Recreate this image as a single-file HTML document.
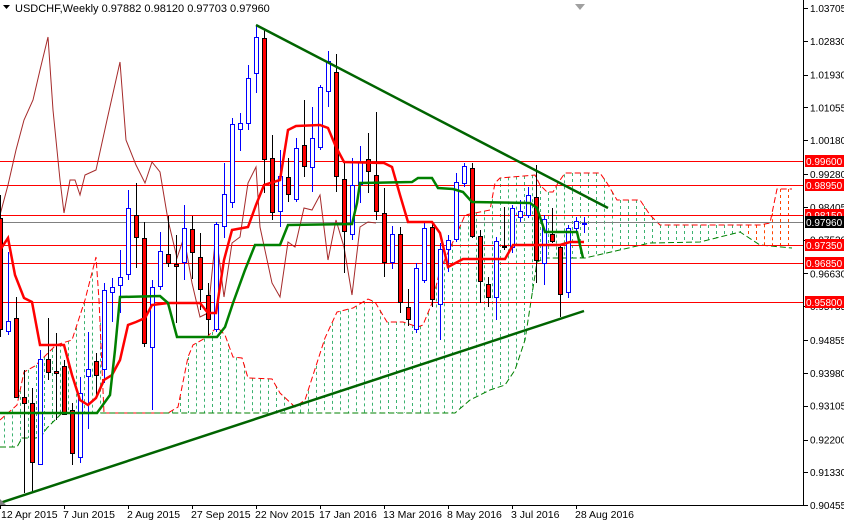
<!DOCTYPE html>
<html><head><meta charset="utf-8">
<style>
html,body{margin:0;padding:0;background:#fff;width:844px;height:520px;overflow:hidden}
svg{display:block}
text{font-family:"Liberation Sans",sans-serif;font-size:10.5px}
.ax{font-size:10px}
</style></head>
<body>
<svg id="s" width="844" height="520" viewBox="0 0 844 520" xmlns="http://www.w3.org/2000/svg">
<g id="cloud"></g>
<g id="lines" fill="none"></g>
<g id="candles" shape-rendering="crispEdges"></g>
<g id="over" fill="none"></g>
<g id="axis"></g>
</svg>
<script>
(function(){
var NS="http://www.w3.org/2000/svg";
function el(p,t,a,txt){var e=document.createElementNS(NS,t);for(var k in a)e.setAttribute(k,a[k]);if(txt!==undefined)e.textContent=txt;document.getElementById(p).appendChild(e);return e;}
function interp(pts,x){if(x<=pts[0][0])return pts[0][1];for(var i=1;i<pts.length;i++){if(x<=pts[i][0]){var a=pts[i-1],b=pts[i];return a[1]+(b[1]-a[1])*(x-a[0])/(b[0]-a[0]);}}return pts[pts.length-1][1];}
function pl(pts){return pts.map(function(p){return p.join(',');}).join(' ');}

var topB=[[0,420],[17,405],[24,372],[35,366],[56,345],[72,340],[85,300],[96,257],[99,300],[104,413],[168,413],[178,407],[188,357],[193,345],[207,337],[217,327],[225,335],[233,357],[242,358],[248,378],[272,379],[280,393],[295,407],[305,400],[325,338],[337,312],[353,308],[368,299],[375,302],[387,322],[403,322],[418,327],[423,325],[432,303],[440,270],[462,222],[465,215],[490,210],[495,183],[500,178],[535,175],[540,185],[547,192],[553,192],[558,183],[565,173],[600,173],[607,183],[617,200],[640,200],[650,215],[660,225],[760,225],[770,223],[777,189],[792,189]];
var botB=[[0,447],[17,447],[22,438],[40,438],[47,428],[55,420],[62,413],[455,413],[470,400],[490,390],[505,385],[515,370],[525,340],[537,262],[545,258],[585,258],[650,243],[700,242],[740,232],[760,245],[792,248]];
for(var x=4;x<=793;x+=8){var t=interp(topB,x),b=interp(botB,x);if(b-t<2)continue;
 el('cloud','line',{x1:x+.5,y1:t,x2:x+.5,y2:b,stroke:x>=745?'#ff4500':'#3cb371','stroke-width':1,'stroke-dasharray':'3,3'});}
el('cloud','polyline',{points:pl(topB),fill:'none',stroke:'#ff0000','stroke-width':1,'stroke-dasharray':'6,3'});
el('cloud','polyline',{points:pl(botB),fill:'none',stroke:'#008000','stroke-width':1,'stroke-dasharray':'6,3'});

[161,185,215,245,263,302].forEach(function(y){el('lines','line',{x1:0,y1:y+.5,x2:803,y2:y+.5,stroke:'#ff0000','stroke-width':1});});
el('lines','line',{x1:0,y1:222.5,x2:803,y2:222.5,stroke:'#808080','stroke-width':1});

el('lines','polyline',{points:pl([[0,215],[8,185],[16,150],[24,120],[33,100],[40,70],[48,37],[53,110],[60,180],[64,213],[70,180],[75,180],[80,195],[85,175],[96,170],[107,120],[120,62],[126,140],[136,165],[145,183],[152,162],[160,172],[168,220],[177,258],[184,237],[192,283],[200,317],[208,313],[216,233],[224,297],[232,243],[240,237],[248,183],[256,167],[260,227],[272,283],[280,297],[288,242],[295,247],[304,208],[312,210],[320,195],[328,260],[336,220],[344,247],[352,295],[360,227],[368,222],[376,223]]),stroke:'#a52a2a','stroke-width':1});

var C=[[0,218,330,195,337,0],[8,321,332,252,335,1],[16,318,398,297,398,0],[24,397,404,370,493,0],[32,403,463,388,492,0],[40,359,465,350,465,1],[48,359,373,318,380,0],[56,371,374,333,420,0],[64,366,415,360,415,0],[72,410,454,403,465,0],[80,393,458,377,463,1],[88,369,377,332,429,1],[96,361,376,353,398,0],[104,290,370,283,383,1],[112,287,293,278,322,1],[120,277,286,250,313,1],[128,208,275,190,280,1],[136,215,238,183,268,0],[144,238,344,222,347,0],[152,287,348,280,410,1],[160,251,287,232,290,1],[168,254,264,216,267,0],[176,264,267,235,323,0],[184,228,263,205,280,1],[192,229,253,216,279,0],[200,257,290,233,310,0],[208,295,320,283,335,0],[216,224,330,222,332,1],[224,194,227,163,238,1],[232,124,203,118,208,1],[240,123,130,113,151,1],[248,78,124,65,130,1],[256,37,74,25,93,1],[264,38,160,30,193,0],[272,158,213,135,220,0],[280,176,212,150,227,1],[288,177,195,158,202,0],[296,148,200,138,202,1],[304,145,167,100,177,0],[312,138,168,107,192,1],[320,87,148,85,150,1],[328,61,92,51,107,1],[336,72,177,54,192,0],[344,179,232,162,273,0],[352,185,235,158,240,1],[360,162,185,146,203,1],[368,159,172,133,193,0],[376,175,212,112,220,0],[384,213,263,188,277,0],[392,234,263,226,269,1],[400,234,303,227,313,0],[408,307,320,289,326,0],[416,268,330,263,333,1],[424,228,281,223,283,1],[432,227,300,222,307,0],[440,249,305,243,340,1],[448,240,250,235,272,1],[456,182,240,173,242,1],[464,166,184,163,187,1],[472,168,237,163,238,0],[480,236,282,230,303,0],[488,284,298,277,307,0],[496,241,298,237,320,1],[504,246,248,207,250,0],[512,208,248,205,253,1],[520,211,218,200,222,1],[528,195,216,187,218,1],[536,197,261,165,283,0],[544,219,264,215,285,1],[552,234,242,208,243,0],[560,247,295,245,317,0],[568,228,293,225,298,1],[576,221,229,217,233,1],[584,223,225,217,233,1]];
C.forEach(function(c){var x=c[0],t=c[1],b=c[2],h=c[3],l=c[4],bull=c[5];var col=bull?'#0000ff':'#000000';
 el('candles','line',{x1:x+.5,y1:h,x2:x+.5,y2:l,stroke:col,'stroke-width':1});
 el('candles','rect',{x:x-1.5,y:t+.5,width:4,height:Math.max(1,b-t-1),fill:bull?'#ffffff':'#ff0000',stroke:col,'stroke-width':1});});

el('over','polyline',{points:pl([[0,250],[8,238],[15,275],[24,298],[32,302],[40,345],[64,345],[72,375],[80,400],[88,405],[96,398],[104,380],[112,375],[120,360],[128,325],[136,322],[145,318],[152,305],[168,303],[200,303],[208,313],[216,313],[224,260],[232,230],[248,227],[256,205],[264,185],[280,180],[288,130],[296,126],[320,125],[328,128],[336,147],[344,162],[384,163],[392,167],[400,195],[408,222],[432,222],[440,233],[448,267],[463,259],[505,259],[513,245],[560,245],[570,242],[584,242]]),stroke:'#ff0000','stroke-width':2.5});
el('over','polyline',{points:pl([[0,413],[97,413],[110,395],[115,350],[120,297],[160,296],[168,303],[177,337],[217,337],[225,327],[233,303],[245,270],[255,245],[280,245],[288,225],[352,224],[357,203],[360,183],[412,182],[418,178],[432,178],[438,188],[453,189],[463,192],[472,202],[530,203],[537,208],[545,232],[577,232],[583,258]]),stroke:'#008000','stroke-width':2.5});
el('over','line',{x1:256,y1:25,x2:608,y2:208,stroke:'#006400','stroke-width':2.5});
el('over','line',{x1:0,y1:503,x2:584,y2:311,stroke:'#006400','stroke-width':2.5});
el('over','polygon',{points:'0,499 6,505 0,505',fill:'#808080'});
el('over','polygon',{points:'575,4 585,4 580,10',fill:'#a0a0a0'});

el('axis','rect',{x:803.5,y:0,width:41,height:520,fill:'#fff'});
el('axis','rect',{x:0,y:505,width:844,height:15,fill:'#fff'});
el('axis','line',{x1:803.5,y1:0,x2:803.5,y2:506,stroke:'#000','stroke-width':1});
el('axis','line',{x1:0,y1:505.5,x2:804,y2:505.5,stroke:'#000','stroke-width':1});
var vals=['1.03705','1.02830','1.01930','1.01055','1.00180','0.99280','0.98405','0.97530','0.96630','0.95755','0.94855','0.93980','0.93105','0.92200','0.91330','0.90455'];
vals.forEach(function(v){var y=8+(1.03705-parseFloat(v))*3751;el('axis','line',{x1:804,y1:Math.round(y)+.5,x2:808,y2:Math.round(y)+.5,stroke:'#000'});el('axis','text',{x:810,y:y+4,fill:'#000','class':'ax'},v);});
[['0.99600',161],['0.98950',185],['0.98150',215],['0.97350',245],['0.96850',263],['0.95800',302],['0.97960',222]].forEach(function(a){var v=a[0],y=a[1];
 el('axis','rect',{x:805,y:y-6,width:39,height:12,fill:v==='0.97960'?'#000':'#ff0000'});
 el('axis','text',{x:806,y:y+4,fill:'#fff','class':'ax'},v);});
[['12 Apr 2015',0],['7 Jun 2015',64],['2 Aug 2015',128],['27 Sep 2015',192],['22 Nov 2015',256],['17 Jan 2016',320],['13 Mar 2016',384],['8 May 2016',448],['3 Jul 2016',512],['28 Aug 2016',576]].forEach(function(a){var t=a[0],x=a[1];
 el('axis','line',{x1:x+.5,y1:505,x2:x+.5,y2:509,stroke:'#000'});
 el('axis','text',{x:x+(x?-1:1),y:518,fill:'#000'},t);});
el('axis','polygon',{points:'3,5 10,5 6.5,9',fill:'#000'});
el('axis','text',{x:15,y:12,fill:'#000','style':'font-size:11px'},'USDCHF,Weekly  0.97882 0.98120 0.97703 0.97960');
})();
</script>
</body></html>
